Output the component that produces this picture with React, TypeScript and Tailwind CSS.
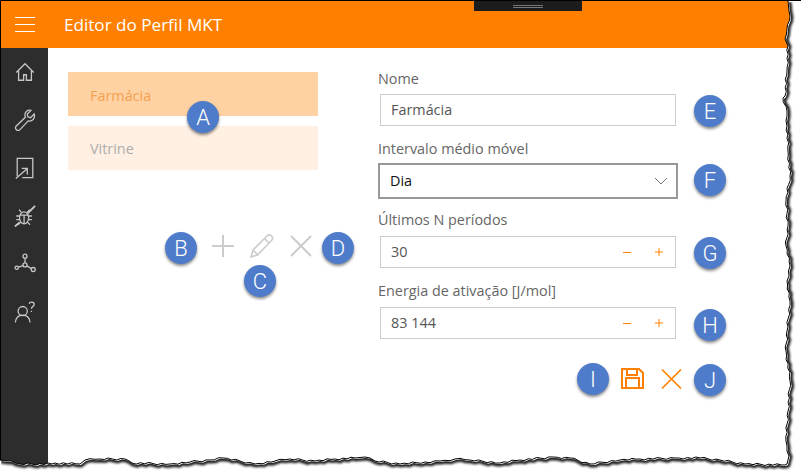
const font = { fontFamily: '"Open Sans", sans-serif' };

const bottomEdge: [number, number][] = [
  [0, 459], [7, 460], [20, 463], [52, 463], [55, 462], [80, 463], [85, 459], [100, 458], [125, 458], [132, 462],
  [170, 463], [190, 461], [210, 459], [223, 457], [240, 460], [255, 463], [275, 460], [290, 458], [315, 460],
  [335, 458], [355, 457], [365, 456], [375, 460], [400, 463], [425, 461], [440, 460], [455, 458], [470, 459],
  [500, 462], [520, 459], [553, 456], [570, 457], [590, 463], [620, 459], [640, 458], [675, 457], [700, 457],
  [720, 459], [745, 463], [785, 464],
];
const rightEdge: [number, number][] = [
  [787, 463], [789, 455], [787, 445], [786, 440], [788, 410], [790, 380], [786, 350], [787, 330], [790, 300],
  [787, 280], [790, 265], [786, 245], [788, 225], [786, 200], [790, 175], [788, 150], [787, 125], [787, 110],
  [783, 97], [785, 95], [787, 70], [788, 45], [785, 38], [787, 28], [790, 15], [789, 10], [788, 0],
];

// small fixed jitter between the traced points
function roughen(points: [number, number][], axis: 0 | 1) {
  const out: string[] = [];
  points.forEach((p, i) => {
    out.push(`${p[0]},${p[1]}`);
    const next = points[i + 1];
    if (!next) return;
    const steps = Math.floor(Math.hypot(next[0] - p[0], next[1] - p[1]) / 4);
    for (let s = 1; s < steps; s++) {
      const t = s / steps;
      const j = ((s * 7 + i * 13) % 5) * 0.5 - 1;
      const x = p[0] + (next[0] - p[0]) * t + (axis === 0 ? j : 0);
      const y = p[1] + (next[1] - p[1]) * t + (axis === 1 ? j : 0);
      out.push(`${x.toFixed(1)},${y.toFixed(1)}`);
    }
  });
  return out;
}

const tornLine = [...roughen(bottomEdge, 1), ...roughen(rightEdge, 0)].join(' L');

function TornEdge() {
  return (
    <svg className="absolute inset-0" width="801" height="472" viewBox="0 0 801 472" fill="none">
      <defs>
        <filter id="tornBlur">
          <feGaussianBlur stdDeviation="1" />
        </filter>
        <clipPath id="outside">
          <path d={`M${tornLine} L801,0 L801,472 L0,472 Z`} />
        </clipPath>
      </defs>
      <path d={`M${tornLine} L801,0 L801,472 L0,472 Z`} fill="#fff" />
      <path d={`M${tornLine}`} stroke="#222" strokeWidth="5" transform="translate(1 1)" filter="url(#tornBlur)" clipPath="url(#outside)" />
      <path d={`M${tornLine}`} stroke="#000" strokeWidth="1" />
    </svg>
  );
}

function Badge({ letter, className }: { letter: string; className: string }) {
  return (
    <div
      style={{ fontFamily: 'Roboto, sans-serif' }}
      className={`absolute w-[32px] h-[32px] rounded-full bg-[#4f7cca] text-white text-[22px] font-light flex items-center justify-center shadow-[0_2px_3px_rgba(0,0,0,0.45)] ${className}`}
    >
      {letter}
    </div>
  );
}

const navIcons = [
  <g key="home">
    <path d="M2.500 12.500 12 3l9.500 9.500" />
    <path d="M5 10.500V21h5.500v-6h3v6H19V10.500" />
  </g>,
  <path key="wrench" d="M22 5.500 18 9.500l-3-1-.5-3L18.500 1.500C15 .5 11.500 3 12 7c0 1 .2 1.500.4 2L2.500 18.500c-2.500 3 1.500 6.500 4 4L15.500 13c4.500 1 8-3 6.500-7.500Z" />,
  <g key="share">
    <path d="M3.500 21V1.500h17v21H9" />
    <path d="M2 23.500 14 13M8.500 12.500h6V19" />
  </g>,
  <g key="bug">
    <ellipse cx="11" cy="14" rx="5" ry="6.500" />
    <path d="M6.500 11h9M11 11v9M8 8 5.500 5M14.500 8 17 5M6 12H2.500M16 12h3.500M6 16H2.500M16 16h3.500M7 19l-2.500 2.500M15 19l2.500 2.500" />
    <path d="M1 23.500 6 19M15 9l8-8" strokeWidth="2" />
  </g>,
  <g key="network">
    <circle cx="12" cy="3.500" r="2.200" />
    <circle cx="12" cy="13" r="2.200" />
    <circle cx="3" cy="16" r="1.800" />
    <circle cx="21" cy="18" r="2.200" />
    <path d="M12 5.700v5.100M9.900 13.800l-5.200 1.700M14 14l5 3" />
  </g>,
  <g key="user">
    <circle cx="9.500" cy="11" r="5" />
    <path d="M1.500 23.500c.5-5 3-8 8-8s7.500 3 8 8" />
    <path d="M16.500 3c.5-2.500 5.500-2.500 5.500.5 0 2.500-3 2.500-3 5M19 10.500V12" />
  </g>,
];

function Stepper({ label, value, className }: { label: string; value: string; className: string }) {
  return (
    <div className={`flex flex-col ${className}`}>
      <label className="text-[14.4px] leading-[19px] text-[#666] mb-[7px]">{label}</label>
      <div className="ml-[2px] w-[296px] h-[32px] border border-[#ccc] flex items-center pl-[10px] text-[14.4px] text-[#555]">
        <span className="flex-1">{value}</span>
        <span className="w-[8px] h-px bg-[#ff8000] mr-[24px]" />
        <svg width="8" height="8" viewBox="0 0 8 8" className="mr-[12px]">
          <path d="M0 4h8M4 0v8" stroke="#ff8000" strokeWidth="1" />
        </svg>
      </div>
    </div>
  );
}

export default function App() {
  return (
    <div style={font} className="relative w-[801px] h-[472px] bg-white overflow-hidden border-t border-black">
      <header className="relative h-[47px] bg-[#ff8000] flex items-center border-l border-black">
        <div className="w-[47px] flex flex-col items-center gap-[6px]">
          <span className="w-[20px] h-px bg-white" />
          <span className="w-[20px] h-px bg-white" />
          <span className="w-[20px] h-px bg-white" />
        </div>
        <h1 className="ml-[16px] text-[17.100px] text-white pt-px">Editor do Perfil MKT</h1>
        <div className="absolute top-0 left-[473px] w-[108px] h-[10px] bg-[#1c1c1c] flex flex-col items-center justify-center gap-px">
          <span className="w-[30px] h-px bg-[#777]" />
          <span className="w-[30px] h-px bg-[#777]" />
        </div>
      </header>

      <div className="flex h-[424px]">
        <nav className="w-[48px] bg-[#2d2d2d] border-l border-black flex flex-col items-center pt-[13px] gap-[26px]">
          {navIcons.map((icon, i) => (
            <svg key={i} width="22" height="22" viewBox="0 0 24 24" fill="none" stroke="#c8c8c8" strokeWidth="1.400">
              {icon}
            </svg>
          ))}
        </nav>

        <div className="flex-1 flex pl-[20px] pt-[24px]">
          <div className="w-[250px]">
            <div className="h-[44px] bg-[#ffd2a3] flex items-center pl-[22px] pt-[3px] text-[14.400px] text-[#f5a04f]">Farmácia</div>
            <div className="mt-[10px] h-[44px] bg-[#fff0e3] flex items-center pl-[22px] pt-[2px] text-[14.400px] text-[#adadad]">Vitrine</div>
          </div>

          <div className="ml-[60px] w-[300px] flex flex-col mt-[-3px]">
            <div className="flex flex-col">
              <label className="text-[14.4px] leading-[19px] text-[#666] mb-[6px]">Nome</label>
              <div className="ml-[2px] w-[296px] h-[32px] border border-[#ccc] flex items-center pl-[10px] text-[14.4px] text-[#555]">Farmácia</div>
            </div>
            <div className="flex flex-col mt-[13px]">
              <label className="text-[14.4px] leading-[19px] text-[#666] mb-[5px]">Intervalo médio móvel</label>
              <div className="w-[300px] h-[36px] border-2 border-[#999] flex items-center justify-between pl-[10px] pr-[8px] text-[14.4px] text-[#111]">
                Dia
                <svg width="14" height="8" viewBox="0 0 14 8" fill="none" stroke="#777" strokeWidth="1">
                  <path d="M1 1l6 6 6-6" />
                </svg>
              </div>
            </div>
            <Stepper label="Últimos N períodos" value="30" className="mt-[11px]" />
            <Stepper label="Energia de ativação [J/mol]" value="83 144" className="mt-[13px]" />
          </div>
        </div>
      </div>

      {/* toolbar icons over the free canvas */}
      <svg className="absolute left-[212px] top-[233px]" width="100" height="24" viewBox="0 0 100 24" fill="none" stroke="#ccc" strokeWidth="2">
        <path d="M11 1v22M0 12h22" />
        <path strokeWidth="1.6" d="M39 23l2-7L55 2c1.500-1.500 3-1.500 4.500 0s1.500 3 0 4.500L45.500 21ZM41 16l5 5M52.500 4.500l5 5" />
        <path d="M79 2l20 20M99 2 79 22" />
      </svg>
      <svg className="absolute left-[621px] top-[365px]" width="62" height="24" viewBox="0 0 62 24" fill="none" stroke="#ff8000">
        <path strokeWidth="2" d="M1 3h17l4 4v15H1ZM6 3v6h10V3M5 22V12h13v10" />
        <path strokeWidth="1.700" d="M41 3.500l19 19M60 3.500 41 22.500" />
      </svg>

      <Badge letter="A" className="left-[187px] top-[100px]" />
      <Badge letter="B" className="left-[165px] top-[231px]" />
      <Badge letter="C" className="left-[244px] top-[264px]" />
      <Badge letter="D" className="left-[322px] top-[231px]" />
      <Badge letter="E" className="left-[694px] top-[94px]" />
      <Badge letter="F" className="left-[694px] top-[163px]" />
      <Badge letter="G" className="left-[694px] top-[236px]" />
      <Badge letter="H" className="left-[694px] top-[308px]" />
      <Badge letter="I" className="left-[577px] top-[362px]" />
      <Badge letter="J" className="left-[694px] top-[363px]" />

      <TornEdge />
    </div>
  );
}
